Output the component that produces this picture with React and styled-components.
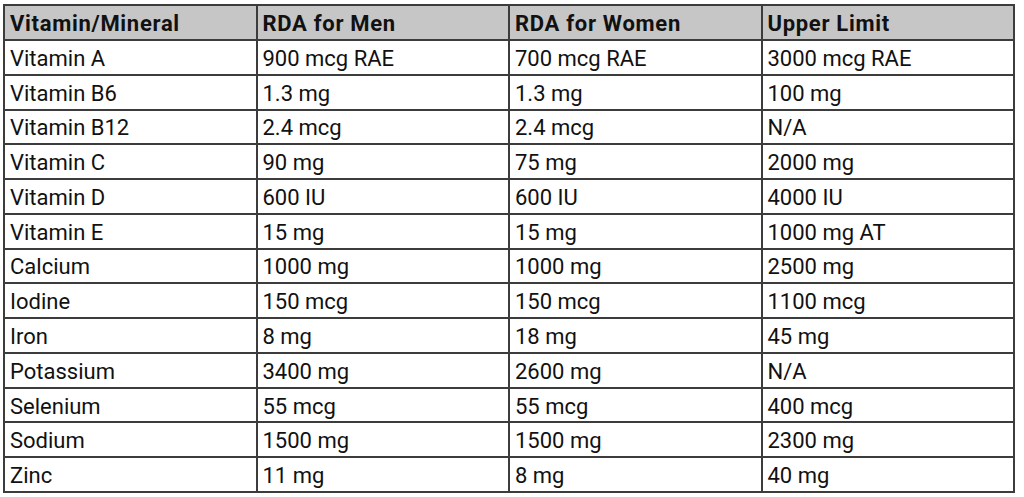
import styled, { createGlobalStyle } from "styled-components";

const rows = [
	["Vitamin A", "900 mcg RAE", "700 mcg RAE", "3000 mcg RAE"],
	["Vitamin B6", "1.3 mg", "1.3 mg", "100 mg"],
	["Vitamin B12", "2.4 mcg", "2.4 mcg", "N/A"],
	["Vitamin C", "90 mg", "75 mg", "2000 mg"],
	["Vitamin D", "600 IU", "600 IU", "4000 IU"],
	["Vitamin E", "15 mg", "15 mg", "1000 mg AT"],
	["Calcium", "1000 mg", "1000 mg", "2500 mg"],
	["Iodine", "150 mcg", "150 mcg", "1100 mcg"],
	["Iron", "8 mg", "18 mg", "45 mg"],
	["Potassium", "3400 mg", "2600 mg", "N/A"],
	["Selenium", "55 mcg", "55 mcg", "400 mcg"],
	["Sodium", "1500 mg", "1500 mg", "2300 mg"],
	["Zinc", "11 mg", "8 mg", "40 mg"],
];

const headers = ["Vitamin/Mineral", "RDA for Men", "RDA for Women", "Upper Limit"];

export default function App() {
	return (
		<>
			<GlobalStyle />
			<Sheet>
				<Table>
					<colgroup>
						<col />
						<col />
						<col />
						<col />
					</colgroup>
					<thead>
						<HeadRow>
							{headers.map((h) => (
								<HeadCell key={h}>{h}</HeadCell>
							))}
						</HeadRow>
					</thead>
					<tbody>
						{rows.map((row) => (
							<Row key={row[0]}>
								{row.map((value, index) => (
									<Cell key={index}>{value}</Cell>
								))}
							</Row>
						))}
					</tbody>
				</Table>
			</Sheet>
		</>
	);
}

const GlobalStyle = createGlobalStyle`
	body {
		margin: 0;
		background: #ffffff;
		font-family: Roboto, "Liberation Sans", Arial, sans-serif;
	}
`;

const Sheet = styled.div`
	padding: 4px 0 0 3px;
	width: 1024px;
	height: 497px;
	box-sizing: border-box;
	overflow: hidden;
`;

const Table = styled.table`
	border-collapse: collapse;
	table-layout: fixed;
	width: 1010px;

	col {
		width: 252.5px;
	}
`;

const HeadRow = styled.tr`
	height: 35px;
	background: #c6c6c6;
`;

const Row = styled.tr`
	height: 34.77px;
`;

const HeadCell = styled.th`
	border: 2px solid #3c3c3c;
	padding: 2px 5px 0 5px;
	text-align: left;
	font-size: 22px;
	font-weight: bold;
	letter-spacing: 0.7px;
	color: #111111;
	white-space: nowrap;
`;

const Cell = styled.td`
	border: 2px solid #3c3c3c;
	padding: 2px 5px 0 5px;
	font-size: 22px;
	color: #111111;
	white-space: nowrap;
`;
